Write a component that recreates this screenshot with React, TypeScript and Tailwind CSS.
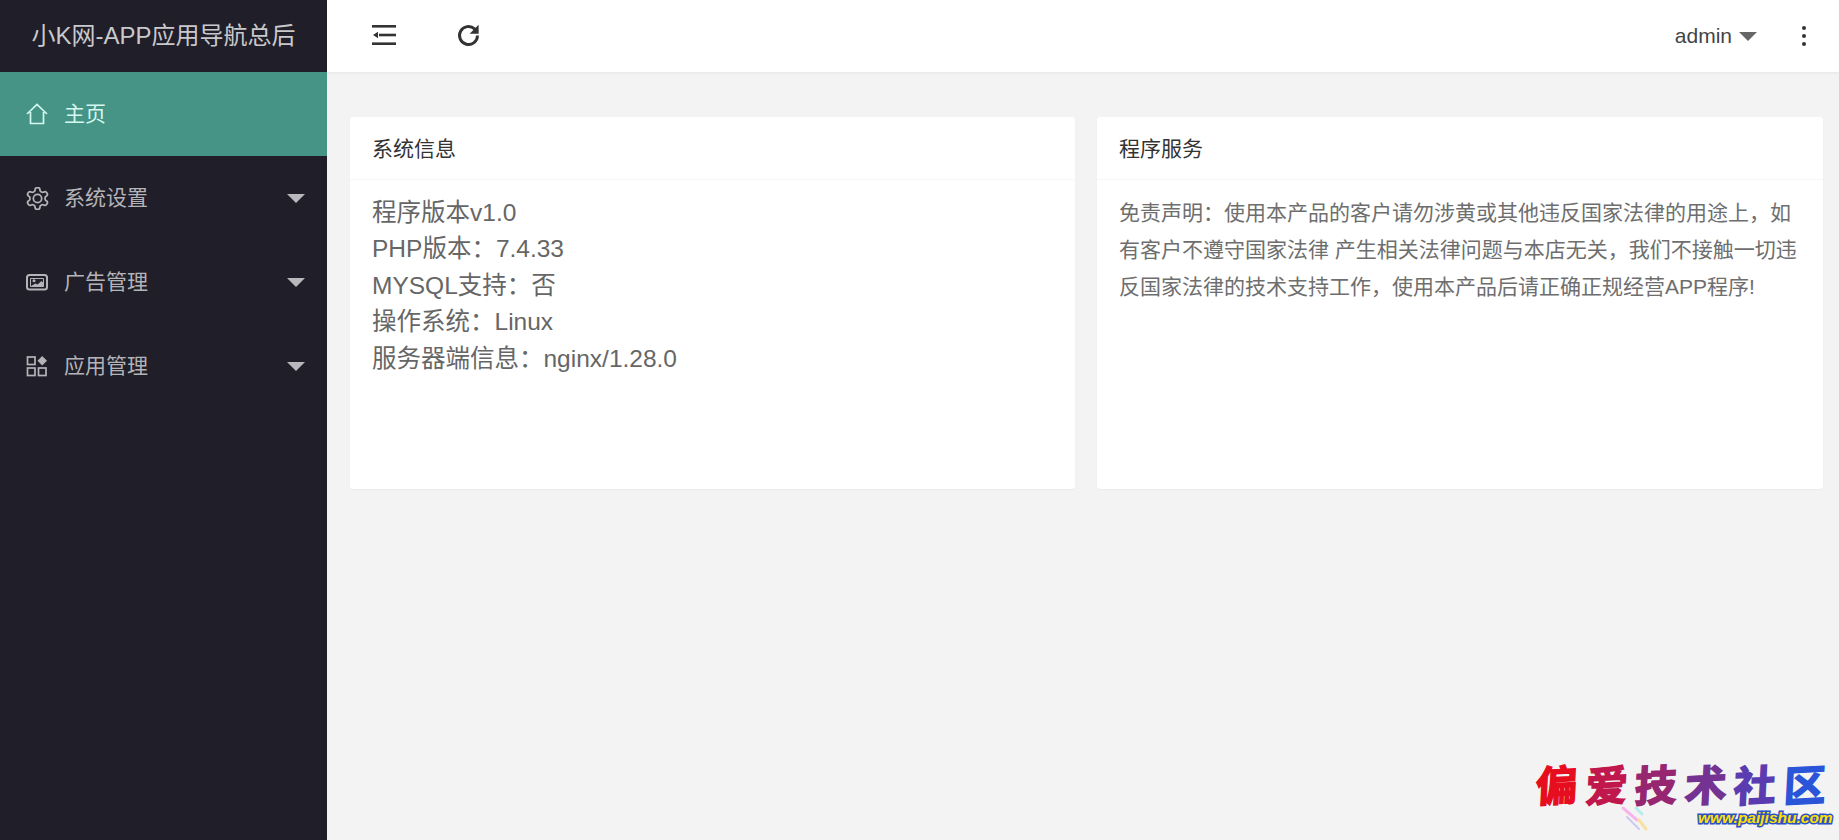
import React from 'react';

const FONT = "font-['Liberation_Sans','Noto_Sans_CJK_SC',sans-serif]";

function HomeIcon() {
    return (
        <svg width="22" height="22" viewBox="0 0 22 22" fill="none" stroke="currentColor" strokeWidth="1.7">
            <path d="M1 11 11 1.5 21 11M4.5 9v11.5h13V9" />
        </svg>
    );
}

function GearIcon() {
    return (
        <svg width="23" height="23" viewBox="1.5 1.5 21 21" fill="none" stroke="currentColor" strokeWidth="1.6" strokeLinejoin="round">
            <path d="M12.22 2h-.44a2 2 0 0 0-2 2v.18a2 2 0 0 1-1 1.73l-.43.25a2 2 0 0 1-2 0l-.15-.08a2 2 0 0 0-2.73.73l-.22.38a2 2 0 0 0 .73 2.73l.15.1a2 2 0 0 1 1 1.72v.51a2 2 0 0 1-1 1.74l-.15.09a2 2 0 0 0-.73 2.73l.22.38a2 2 0 0 0 2.73.73l.15-.08a2 2 0 0 1 2 0l.43.25a2 2 0 0 1 1 1.73V20a2 2 0 0 0 2 2h.44a2 2 0 0 0 2-2v-.18a2 2 0 0 1 1-1.73l.43-.25a2 2 0 0 1 2 0l.15.08a2 2 0 0 0 2.73-.73l.22-.39a2 2 0 0 0-.73-2.73l-.15-.08a2 2 0 0 1-1-1.74v-.5a2 2 0 0 1 1-1.74l.15-.09a2 2 0 0 0 .73-2.73l-.22-.38a2 2 0 0 0-2.73-.73l-.15.08a2 2 0 0 1-2 0l-.43-.25a2 2 0 0 1-1-1.73V4a2 2 0 0 0-2-2z" />
            <circle cx="12" cy="12" r="3.8" />
        </svg>
    );
}

function PictureIcon() {
    return (
        <svg width="22" height="22" viewBox="0 0 22 22" fill="none" stroke="currentColor" strokeWidth="2">
            <rect x="1" y="4" width="20" height="14.5" rx="2.5" />
            <path d="M4.5 15.5h13V7.5h-13z" strokeWidth="1" />
            <circle cx="8" cy="9.8" r="1.5" fill="currentColor" stroke="none" />
            <path d="m5 15 4.5-2.5 2 1 4-3.5 1.5 1.5V15z" fill="currentColor" stroke="none" />
        </svg>
    );
}

function AppsIcon() {
    return (
        <svg width="22" height="22" viewBox="0 0 22 22" fill="none" stroke="currentColor" strokeWidth="1.7">
            <rect x="1.5" y="2" width="7.5" height="7.5" />
            <rect x="1.5" y="13" width="7.5" height="7.5" />
            <rect x="12.5" y="13" width="7.5" height="7.5" />
            <path d="m16.2 1 4.8 4.7-4.8 4.8-4.7-4.8z" fill="currentColor" stroke="none" />
        </svg>
    );
}

function Caret({ className }: { className: string }) {
    return <span className={"block w-0 h-0 border-x-[9px] border-x-transparent border-t-[9px] " + className} />;
}

function MenuItem({ icon, label, active, hasChildren }: { icon: React.ReactNode; label: string; active?: boolean; hasChildren?: boolean }) {
    return (
        <div className={"h-[84px] flex items-center pl-[26px] pr-[22px] text-[21px] " + (active ? "bg-[#459485] text-[#d4f8ef]" : "text-[#b4b4b8]")}>
            <span className="w-[22px] h-[22px] mr-[16px]">{icon}</span>
            <span className="flex-1">{label}</span>
            {hasChildren && <Caret className="border-t-[#b9b9bd]" />}
        </div>
    );
}

function Card({ title, children }: { title: string; children: React.ReactNode }) {
    return (
        <div className="bg-white rounded-[3px] h-[372px] shadow-[0_1px_2px_rgba(0,0,0,0.04)]">
            <div className="h-[63px] pt-[2px] px-[22px] flex items-center text-[21px] text-[#333333] border-b border-[#f6f6f6]">{title}</div>
            <div className="px-[22px] pt-[14px]">{children}</div>
        </div>
    );
}

function Watermark() {
    const chars: [string, string][] = [
        ['偏', 'text-[#e60d1f]'],
        ['爱', 'text-[#c0174d]'],
        ['技', 'text-[#962670]'],
        ['术', 'text-[#743392]'],
        ['社', 'text-[#5a3cb0]'],
        ['区', 'text-[#2a55d8]'],
    ];
    return (
        <div className="absolute left-[1536px] top-[758px] w-[290px] font-['Noto_Sans_CJK_SC',sans-serif]">
            <div className="flex justify-between text-[42px] leading-[50px] font-bold">
                {chars.map(([c, color]) => (
                    <span key={c} className={"inline-block -rotate-3 -skew-x-6 [-webkit-text-stroke:1.5px_currentColor] " + color}>{c}</span>
                ))}
            </div>
            <div className="absolute left-[162px] top-[51px] font-['Liberation_Sans',sans-serif] font-bold italic text-[15.5px] leading-[18px] text-[#ffe100] [-webkit-text-stroke:3px_#2b50c8] [paint-order:stroke_fill]">
                www.paijishu.com
            </div>
            <svg className="absolute left-[85px] top-[48px]" width="28" height="26" viewBox="0 0 28 26" fill="none" strokeWidth="3" strokeLinecap="round">
                <path d="m2 2 14 12" stroke="#f7b6ea" />
                <path d="m15 2 6 6" stroke="#b5ecec" />
                <path d="m6 11 12 12" stroke="#c9cbef" strokeWidth="2" />
                <path d="m18 14 7 9" stroke="#f7e0a0" />
            </svg>
        </div>
    );
}

export default function App() {
    return (
        <div className={"relative flex h-[840px] overflow-hidden bg-[#f3f3f3] " + FONT}>
            <aside className="w-[327px] shrink-0 bg-[#1f1e29]">
                <div className="h-[72px] flex items-center justify-center text-[24px] text-[#c9c9cc] whitespace-nowrap">小K网-APP应用导航总后</div>
                <MenuItem icon={<HomeIcon />} label="主页" active />
                <MenuItem icon={<GearIcon />} label="系统设置" hasChildren />
                <MenuItem icon={<PictureIcon />} label="广告管理" hasChildren />
                <MenuItem icon={<AppsIcon />} label="应用管理" hasChildren />
            </aside>
            <div className="flex-1 flex flex-col min-w-0">
                <header className="h-[72px] bg-white flex items-center shadow-[0_1px_3px_rgba(0,0,0,0.06)]">
                    <div className="ml-[45px] mb-[2px] text-[#333333]">
                        <svg width="24" height="20" viewBox="0 0 24 20" fill="currentColor" className="block">
                            <rect x="0" y="0" width="24" height="2.6" />
                            <rect x="0" y="17.4" width="24" height="2.6" />
                            <rect x="7" y="8.7" width="17" height="2.6" />
                            <path d="M1 10l5-3.2v6.4z" />
                        </svg>
                    </div>
                    <div className="ml-[59px] mb-[2px] text-[#333333]">
                        <svg width="27" height="27" viewBox="0 0 24 24" fill="none" stroke="currentColor" strokeWidth="2.6" className="block">
                            <path d="M20 12a8 8 0 1 1-2.6-5.9L20 8.6" />
                            <path d="M21 2.5v8h-8z" fill="currentColor" stroke="none" />
                        </svg>
                    </div>
                    <div className="ml-auto flex items-center text-[21px] text-[#444444]">
                        <span>admin</span>
                        <Caret className="ml-[7px] border-t-[#666666]" />
                    </div>
                    <div className="ml-[45px] mr-[33px] flex flex-col gap-[4px]">
                        <span className="block w-[4px] h-[4px] rounded-full bg-[#333333]" />
                        <span className="block w-[4px] h-[4px] rounded-full bg-[#333333]" />
                        <span className="block w-[4px] h-[4px] rounded-full bg-[#333333]" />
                    </div>
                </header>
                <main className="grid grid-cols-[725px_726px] gap-[22px] pl-[23px] pt-[45px]">
                    <Card title="系统信息">
                        <div className="pt-[1px] text-[24.5px] leading-[36.4px] text-[#666666]">
                            <div>程序版本v1.0</div>
                            <div>PHP版本：7.4.33</div>
                            <div>MYSQL支持：否</div>
                            <div>操作系统：Linux</div>
                            <div>服务器端信息：nginx/1.28.0</div>
                        </div>
                    </Card>
                    <Card title="程序服务">
                        <p className="text-[21px] leading-[37px] text-[#6e6e6e]">
                            免责声明：使用本产品的客户请勿涉黄或其他违反国家法律的用途上，如有客户不遵守国家法律 产生相关法律问题与本店无关，我们不接触一切违反国家法律的技术支持工作，使用本产品后请正确正规经营APP程序!
                        </p>
                    </Card>
                </main>
            </div>
            <Watermark />
        </div>
    );
}
